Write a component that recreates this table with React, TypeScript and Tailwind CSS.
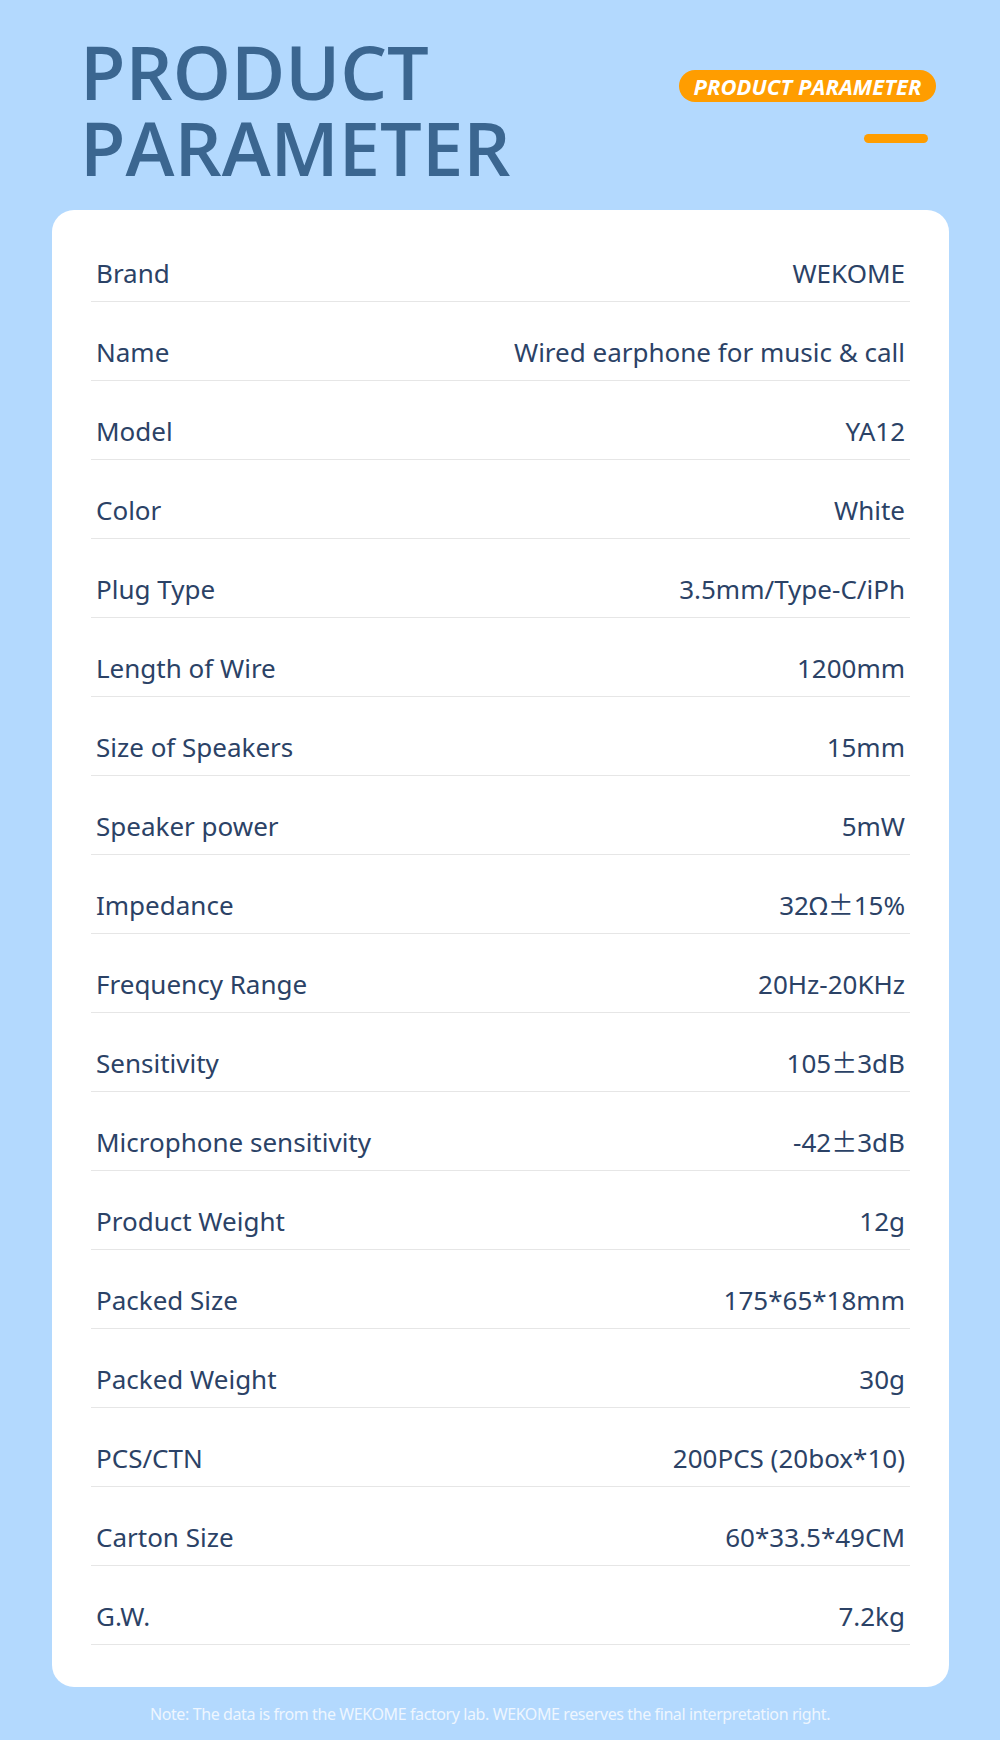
import React from "react";

const rows: [string, string][] = [
  ["Brand", "WEKOME"],
  ["Name", "Wired earphone for music & call"],
  ["Model", "YA12"],
  ["Color", "White"],
  ["Plug Type", "3.5mm/Type-C/iPh"],
  ["Length of Wire", "1200mm"],
  ["Size of Speakers", "15mm"],
  ["Speaker power", "5mW"],
  ["Impedance", "32Ω±15%"],
  ["Frequency Range", "20Hz-20KHz"],
  ["Sensitivity", "105±3dB"],
  ["Microphone sensitivity", "-42±3dB"],
  ["Product Weight", "12g"],
  ["Packed Size", "175*65*18mm"],
  ["Packed Weight", "30g"],
  ["PCS/CTN", "200PCS (20box*10)"],
  ["Carton Size", "60*33.5*49CM"],
  ["G.W.", "7.2kg"],
];

function Value({ v }: { v: string }) {
  const parts = v.split("±");
  return (
    <span>
      {parts.map((p, i) => (
        <React.Fragment key={i}>
          {i > 0 && (
            <span className="font-['Noto_Sans_CJK_SC',sans-serif]">±</span>
          )}
          {p}
        </React.Fragment>
      ))}
    </span>
  );
}

export default function App() {
  return (
    <div className="w-[1000px] h-[1740px] bg-[#b3d9fe] overflow-hidden font-['Noto_Sans',sans-serif]">
      <div className="flex justify-between pl-[80px] pr-[64px] pt-[34px] h-[210px]">
        <h1 className="font-['Open_Sans',sans-serif] font-semibold text-[74px] leading-[76px] text-[#3b6690]">
          <span className="block h-[76px] leading-[76px]">PRODUCT</span>
          <span className="block h-[76px] leading-[76px]">PARAMETER</span>
        </h1>
        <div className="flex flex-col items-end pt-[36px]">
          <div className="h-[32px] w-[257px] rounded-full bg-[#ff9d00] flex items-center justify-center">
            <span className="font-['Open_Sans',sans-serif] italic font-bold text-[22px] leading-[28px] tracking-[0.1px] text-white">
              PRODUCT PARAMETER
            </span>
          </div>
          <div className="mt-[32px] mr-[8px] w-[64px] h-[9px] rounded-full bg-[#ff9d00]" />
        </div>
      </div>
      <div className="mx-[52px] w-[897px] bg-white rounded-[22px] pt-[13px] pb-[42px] px-[39px]">
        {rows.map(([k, v]) => (
          <div
            key={k}
            className="h-[79px] flex items-end justify-between border-b border-[#e6e6e6] pb-[12px] px-[5px] text-[26px] leading-[32px] text-[#2b4266]"
          >
            <span>{k}</span>
            <Value v={v} />
          </div>
        ))}
      </div>
      <p className="mt-[15px] pr-[20px] text-center text-[16px] leading-[24px] tracking-[-0.4px] text-[#eef6ff]">
        Note: The data is from the WEKOME factory lab. WEKOME reserves the final interpretation right.
      </p>
    </div>
  );
}
